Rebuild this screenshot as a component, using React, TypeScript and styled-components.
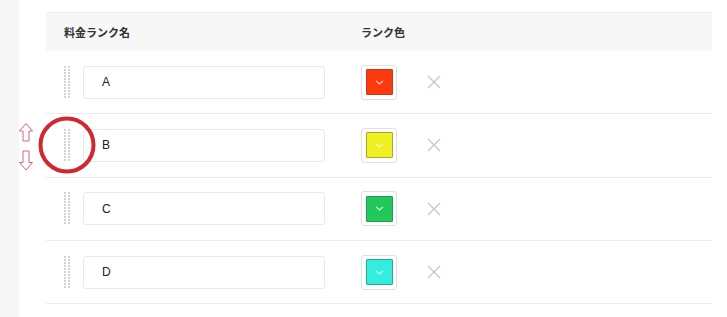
import * as React from 'react';
import styled, { createGlobalStyle } from 'styled-components';

const GlobalStyle = createGlobalStyle`
  html, body {
    margin: 0;
    padding: 0;
    background: #ffffff;
    font-family: 'Liberation Sans', 'Noto Sans CJK JP', sans-serif;
  }
`;

interface Rank {
  name: string;
  color: string;
  edge: string;
}

const ranks: Rank[] = [
  { name: 'A', color: '#fc3a0e', edge: '#c53a20' },
  { name: 'B', color: '#eef022', edge: '#a8a830' },
  { name: 'C', color: '#22c95a', edge: '#1f9e4c' },
  { name: 'D', color: '#33eedb', edge: '#2aa79c' }
];

const Page = styled.div`
  display: flex;
  width: 727px;
  height: 317px;
  overflow: hidden;
  position: relative;
`;

const Sidebar = styled.div`
  width: 19px;
  flex-shrink: 0;
  background: #f6f6f6;
`;

const Main = styled.div`
  padding: 12px 0 0 27px;
`;

const Table = styled.div`
  width: 666px;
  border-top: 1px solid #ececec;
`;

const HeaderRow = styled.div`
  display: flex;
  align-items: center;
  height: 38px;
  background: #f7f7f7;
  font-family: 'Noto Sans CJK JP', sans-serif;
  font-size: 11px;
  font-weight: 700;
  color: #333;
`;

const HeaderCell = styled.div<{ $width: number; $inset: number }>`
  width: ${(p) => p.$width}px;
  padding-left: ${(p) => p.$inset}px;
  box-sizing: border-box;
`;

const Row = styled.div`
  display: flex;
  align-items: center;
  height: 62.3px;
  border-bottom: 1px solid #ececec;
`;

const NameCell = styled.div`
  display: flex;
  align-items: center;
  width: 315px;
  padding-left: 18px;
  box-sizing: border-box;
`;

const HandleWrap = styled.div`
  width: 6px;
  height: 33px;
  margin-right: 13px;
  display: grid;
  grid-template-columns: 2px 2px;
  column-gap: 2px;
  row-gap: 1px;
  align-content: start;
`;

const Dot = styled.span`
  width: 2px;
  height: 2px;
  background: #d4d4d4;
`;

const NameInput = styled.div`
  width: 242px;
  height: 33px;
  box-sizing: border-box;
  border: 1px solid #e8e8e8;
  border-radius: 3px;
  padding-left: 18px;
  display: flex;
  align-items: center;
  font-size: 12px;
  color: #222;
`;

const SwatchButton = styled.div`
  width: 36px;
  height: 35px;
  box-sizing: border-box;
  border: 1px solid #e0e0e0;
  border-radius: 3px;
  display: flex;
  align-items: center;
  justify-content: center;
`;

const Swatch = styled.div<{ $color: string; $edge: string }>`
  width: 27px;
  height: 26px;
  box-sizing: border-box;
  background: ${(p) => p.$color};
  border: 1px solid ${(p) => p.$edge};
  border-radius: 1px;
  display: flex;
  align-items: center;
  justify-content: center;
`;

const RemoveButton = styled.div`
  margin-left: 30px;
  width: 14px;
  height: 14px;
  display: flex;
`;

// annotation drawn over the screenshot (circle + move arrows)
const Overlay = styled.svg`
  position: absolute;
  left: 0;
  top: 0;
  pointer-events: none;
`;

const Chevron = () => (
  <svg width="9" height="5" viewBox="0 0 9 5">
    <path d="M1 0.8 L4.5 4 L8 0.8" fill="none" stroke="rgba(255,255,255,0.8)" strokeWidth="1.1" />
  </svg>
);

const Cross = () => (
  <svg width="14" height="14" viewBox="0 0 14 14">
    <path d="M1 1 L13 13 M13 1 L1 13" stroke="#c8c8c8" strokeWidth="1.4" />
  </svg>
);

const DragHandle = () => (
  <HandleWrap>
    {Array.from({ length: 22 }).map((_, i) => (
      <Dot key={i} />
    ))}
  </HandleWrap>
);

export default function App() {
  return (
    <>
      <GlobalStyle />
      <Page>
        <Sidebar />
        <Main>
          <Table>
            <HeaderRow>
              <HeaderCell $width={315} $inset={18}>
                料金ランク名
              </HeaderCell>
              <HeaderCell $width={200} $inset={0}>
                ランク色
              </HeaderCell>
            </HeaderRow>
            {ranks.map((r) => (
              <Row key={r.name}>
                <NameCell>
                  <DragHandle />
                  <NameInput>{r.name}</NameInput>
                </NameCell>
                <SwatchButton>
                  <Swatch $color={r.color} $edge={r.edge}>
                    <Chevron />
                  </Swatch>
                </SwatchButton>
                <RemoveButton>
                  <Cross />
                </RemoveButton>
              </Row>
            ))}
          </Table>
        </Main>
        <Overlay width="727" height="317" viewBox="0 0 727 317">
          <circle cx="67" cy="145" r="26.5" fill="none" stroke="#d0282e" strokeWidth="4" />
          <path
            d="M26 123.5 L32.5 131 L29 131 L29 141 L23 141 L23 131 L19.5 131 Z"
            fill="#fff"
            stroke="#c86a7a"
            strokeWidth="1"
          />
          <path
            d="M26 170 L32.5 162.5 L29 162.5 L29 151 L23 151 L23 162.5 L19.5 162.5 Z"
            fill="#fff"
            stroke="#c86a7a"
            strokeWidth="1"
          />
        </Overlay>
      </Page>
    </>
  );
}
